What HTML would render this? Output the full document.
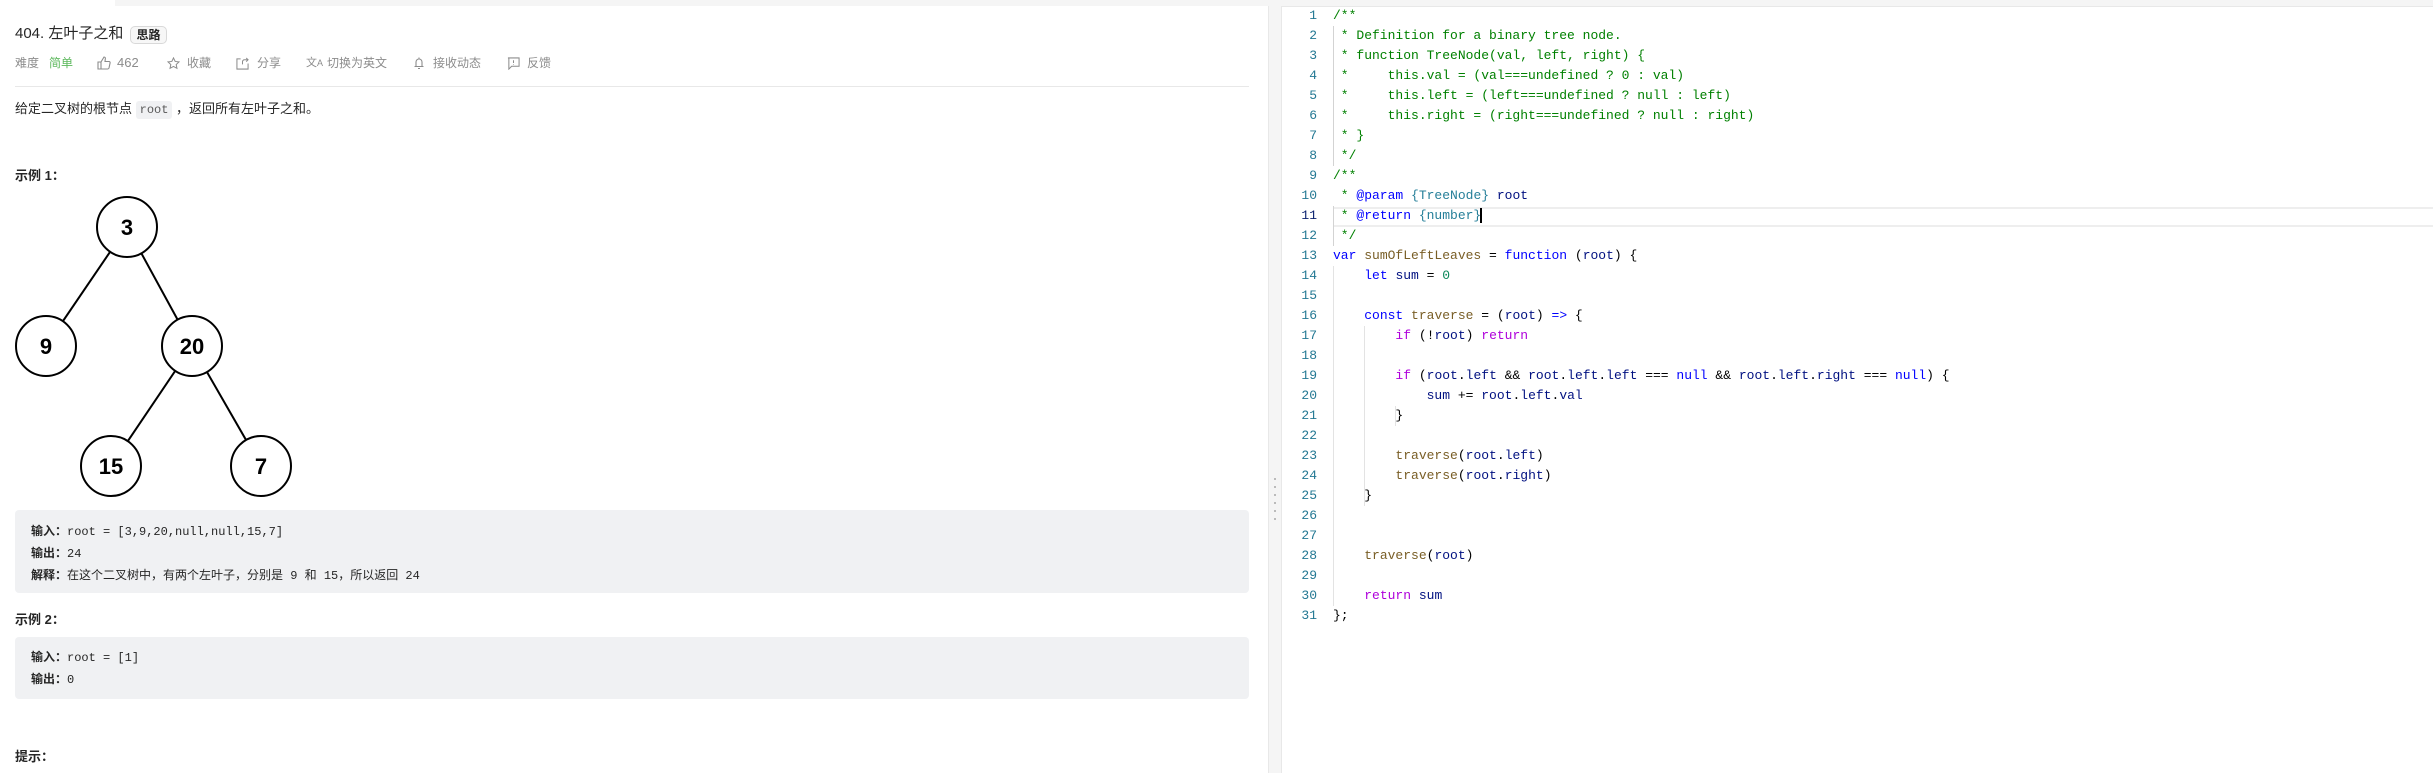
<!DOCTYPE html>
<html><head><meta charset="utf-8"><style>
*{margin:0;padding:0;box-sizing:border-box}
body{width:2433px;height:773px;overflow:hidden;background:#f5f5f5;font-family:"Liberation Sans","Noto Sans CJK SC",sans-serif;position:relative}
.abs{position:absolute;white-space:nowrap}
#left{position:absolute;left:0;top:6px;width:1269px;height:767px;background:#fff;border-right:1px solid #e8e8e8}
#right{position:absolute;left:1281px;top:6px;width:1152px;height:767px;background:#fff;border-left:1px solid #e8e8e8;border-top:1px solid #e8e8e8}
.meta{font-size:12px;color:#8c8c8c;top:55px;line-height:16px}
.box{position:absolute;left:15px;width:1234px;background:#f0f1f3;border-radius:4px}
.mono{font-family:"Liberation Mono","Noto Sans CJK SC",monospace;font-size:12px;color:#262626}
.b{font-weight:bold;font-family:"Liberation Sans","Noto Sans CJK SC",sans-serif}
.code{position:absolute;left:1333px;top:6px;font-family:"Liberation Mono",monospace;font-size:13px;line-height:20px;color:#000;white-space:pre}
.ln{position:absolute;left:1285px;width:32px;top:6px;text-align:right;font-family:"Liberation Mono",monospace;font-size:13px;line-height:20px;color:#237893;white-space:pre}
.c{color:#008000}.k{color:#0000ff}.p{color:#af00db}.f{color:#795e26}.v{color:#001080}.n{color:#098658}.t{color:#267f99}
</style></head><body>
<div style="position:absolute;left:0;top:0;width:115px;height:6px;background:#fff"></div>
<div id="left"></div>
<div id="right"></div>

<div class="abs" style="left:15px;top:24px;font-size:15px;color:#262626;line-height:20px">404. 左叶子之和</div>
<div class="abs" style="left:130px;top:26px;width:37px;height:18px;border:1px solid #d9d9d9;border-radius:5px;background:#f7f7f7;font-size:12px;font-weight:bold;text-align:center;line-height:16px;color:#262626">思路</div>

<div class="abs meta" style="left:15px">难度</div>
<div class="abs meta" style="left:49px;color:#5cb85c">简单</div>
<svg class="abs" style="left:97px;top:56px" width="14" height="14" viewBox="0 0 14 14" fill="none" stroke="#8c8c8c" stroke-width="1.1"><path d="M1 6h3v7H1zM4 6l3-5c1.2 0 1.6 1 1.3 2L8 5.5h4c.8 0 1.3.7 1.1 1.4L12 12c-.2.6-.7 1-1.3 1H4"/></svg>
<div class="abs meta" style="left:117px;font-size:13px">462</div>
<svg class="abs" style="left:167px;top:57px" width="13" height="13" viewBox="0 0 14 14" fill="none" stroke="#8c8c8c" stroke-width="1.1"><path d="M7 1l1.8 3.8 4.1.5-3 2.8.8 4.1L7 10.2 3.3 12.2l.8-4.1-3-2.8 4.1-.5z"/></svg>
<div class="abs meta" style="left:187px">收藏</div>
<svg class="abs" style="left:236px;top:57px" width="13" height="13" viewBox="0 0 14 14" fill="none" stroke="#8c8c8c" stroke-width="1.1"><path d="M5 2H1v11h12V7M7 8V5c0-1 1-2 2-2h4M11 1l2 2-2 2"/></svg>
<div class="abs meta" style="left:257px">分享</div>
<div class="abs meta" style="left:306px;font-size:11px">文<span style="font-size:9px">A</span></div>
<div class="abs meta" style="left:327px">切换为英文</div>
<svg class="abs" style="left:413px;top:56px" width="12" height="14" viewBox="0 0 12 14" fill="none" stroke="#8c8c8c" stroke-width="1.1"><path d="M3 10V6a3 3 0 0 1 6 0v4M1.5 10.5h9M6 1.5v1M5 12.5h2"/></svg>
<div class="abs meta" style="left:433px">接收动态</div>
<svg class="abs" style="left:507px;top:57px" width="13" height="13" viewBox="0 0 14 14" fill="none" stroke="#8c8c8c" stroke-width="1.1"><path d="M1 1h12v9H5l-3 3V1M7 3.5v3M7 8v.5"/></svg>
<div class="abs meta" style="left:527px">反馈</div>

<div style="position:absolute;left:15px;top:86px;width:1234px;height:1px;background:#e8e8e8"></div>

<div class="abs" style="left:15px;top:100px;font-size:13px;color:#262626;line-height:18px">给定二叉树的根节点 <span class="mono" style="background:#f0f1f3;padding:2px 4px;border-radius:3px;color:#595959">root</span> ，返回所有左叶子之和。</div>
<div class="abs b" style="left:15px;top:165px;font-size:13px;color:#262626">示例 1：</div>

<svg class="abs" style="left:0;top:190px" width="320" height="320">
<g stroke="#000" stroke-width="2" fill="#fff">
<line x1="127" y1="37" x2="46" y2="156"/><line x1="127" y1="37" x2="192" y2="156"/>
<line x1="192" y1="156" x2="111" y2="276"/><line x1="192" y1="156" x2="261" y2="276"/>
<circle cx="127" cy="37" r="30"/><circle cx="46" cy="156" r="30"/><circle cx="192" cy="156" r="30"/><circle cx="111" cy="276" r="30"/><circle cx="261" cy="276" r="30"/>
</g>
<g font-family="Liberation Sans" font-weight="bold" font-size="22" text-anchor="middle" fill="#000">
<text x="127" y="45">3</text><text x="46" y="164">9</text><text x="192" y="164">20</text><text x="111" y="284">15</text><text x="261" y="284">7</text>
</g></svg>

<div class="box" style="top:510px;height:83px"></div>
<div class="abs mono" style="left:31px;top:521px;line-height:21px"><span class="b">输入：</span>root = [3,9,20,null,null,15,7]<br><span class="b">输出：</span>24<br><span class="b">解释：</span>在这个二叉树中，有两个左叶子，分别是 9 和 15，所以返回 24</div>
<div class="abs b" style="left:15px;top:609px;font-size:13px;color:#262626">示例 2：</div>
<div class="box" style="top:637px;height:62px"></div>
<div class="abs mono" style="left:31px;top:647px;line-height:21px"><span class="b">输入：</span>root = [1]<br><span class="b">输出：</span>0</div>
<div class="abs b" style="left:15px;top:746px;font-size:13px;color:#262626">提示：</div>

<div style="position:absolute;left:1274px;top:478px;width:2px;height:42px;background:repeating-linear-gradient(#bbb 0 2px,transparent 2px 8px)"></div>

<div style="position:absolute;left:1333px;top:207px;width:1100px;height:20px;border-top:2px solid #eee;border-bottom:2px solid #eee"></div>
<div style="position:absolute;left:1333px;top:26px;width:1px;height:140px;background:#d3d3d3"></div>
<div style="position:absolute;left:1333px;top:206px;width:1px;height:40px;background:#d3d3d3"></div>
<div style="position:absolute;left:1333px;top:266px;width:1px;height:340px;background:#e3e3e3"></div>
<div style="position:absolute;left:1364px;top:326px;width:1px;height:180px;background:#e3e3e3"></div>
<div style="position:absolute;left:1395px;top:406px;width:1px;height:20px;background:#e3e3e3"></div>

<div class="ln">1
2
3
4
5
6
7
8
9
10
<span style="color:#0b216f">11</span>
12
13
14
15
16
17
18
19
20
21
22
23
24
25
26
27
28
29
30
31</div>
<div class="code"><span class="c">/**
 * Definition for a binary tree node.
 * function TreeNode(val, left, right) {
 *     this.val = (val===undefined ? 0 : val)
 *     this.left = (left===undefined ? null : left)
 *     this.right = (right===undefined ? null : right)
 * }
 */
/**
 * <span class="k">@param</span> <span class="t">{TreeNode}</span> <span class="v">root</span>
 * <span class="k">@return</span> <span class="t">{number}</span></span><span style="border-left:2px solid #000;margin-left:-1px"></span><span class="c">
 */</span>
<span class="k">var</span> <span class="f">sumOfLeftLeaves</span> = <span class="k">function</span> (<span class="v">root</span>) {
    <span class="k">let</span> <span class="v">sum</span> = <span class="n">0</span>

    <span class="k">const</span> <span class="f">traverse</span> = (<span class="v">root</span>) <span class="k">=&gt;</span> {
        <span class="p">if</span> (!<span class="v">root</span>) <span class="p">return</span>

        <span class="p">if</span> (<span class="v">root</span>.<span class="v">left</span> &amp;&amp; <span class="v">root</span>.<span class="v">left</span>.<span class="v">left</span> === <span class="k">null</span> &amp;&amp; <span class="v">root</span>.<span class="v">left</span>.<span class="v">right</span> === <span class="k">null</span>) {
            <span class="v">sum</span> += <span class="v">root</span>.<span class="v">left</span>.<span class="v">val</span>
        }

        <span class="f">traverse</span>(<span class="v">root</span>.<span class="v">left</span>)
        <span class="f">traverse</span>(<span class="v">root</span>.<span class="v">right</span>)
    }


    <span class="f">traverse</span>(<span class="v">root</span>)

    <span class="p">return</span> <span class="v">sum</span>
};</div>
</body></html>
